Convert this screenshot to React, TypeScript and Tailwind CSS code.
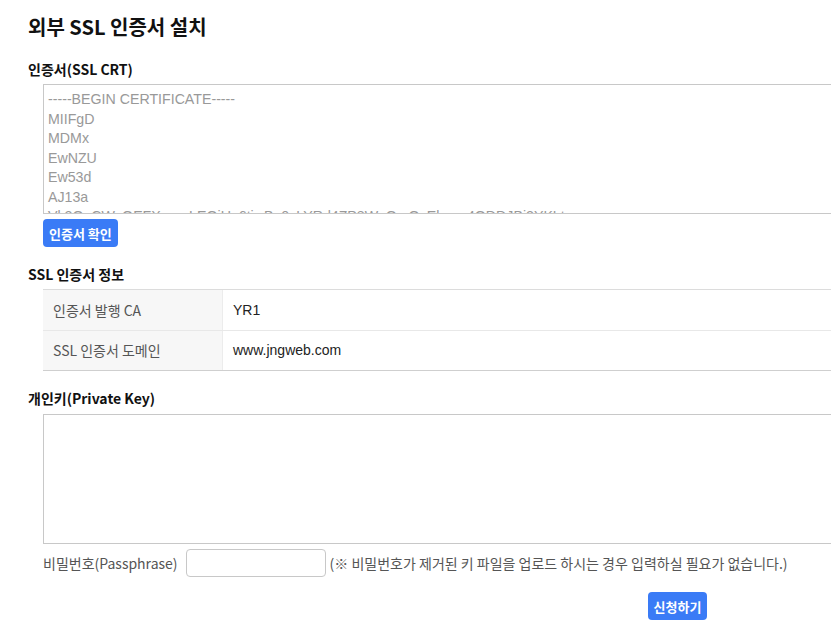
const KR = '"Noto Sans CJK KR", "Noto Sans", sans-serif';
const LAT = '"Liberation Sans", "Noto Sans CJK KR", sans-serif';

const certLines = [
  '-----BEGIN CERTIFICATE-----',
  'MIIFgD',
  'MDMx',
  'EwNZU',
  'Ew53d',
  'AJ13a',
  'Vk2OaCWvQEFXw  wLEQiUa6tiwBe0vLYRd4ZP8WuOmQyEk      4ODDJBi2YKLt',
];

function SectionLabel({ children, className }: { children: React.ReactNode; className?: string }) {
  return (
    <div className={`text-[14px] leading-[20px] font-bold text-[#111] ${className ?? ''}`} style={{ fontFamily: KR }}>
      {children}
    </div>
  );
}

function BlueButton({ children }: { children: React.ReactNode }) {
  return (
    <button
      className="h-[28px] px-[6px] rounded-[4px] bg-[#3a7bf6] text-white text-[13px] font-bold leading-none"
      style={{ fontFamily: KR }}
    >
      {children}
    </button>
  );
}

export default function App() {
  const info = [
    { k: '인증서 발행 CA', v: 'YR1' },
    { k: 'SSL 인증서 도메인', v: 'www.jngweb.com' },
  ];

  return (
    <div className="w-full min-h-[644px] overflow-hidden bg-white">
      <div className="w-[1300px] pl-[28px] pt-[12px]">
        <h2 className="text-[20px] leading-[30px] font-bold text-[#111]" style={{ fontFamily: KR }}>
          외부 SSL 인증서 설치
        </h2>

        <SectionLabel className="mt-[17px]">인증서(SSL CRT)</SectionLabel>
        {/* certificate box, last line is clipped by the box like in the source */}
        <div className="ml-[15px] mt-[5px] h-[130px] border border-[#c8c8c8] overflow-hidden pl-[4px] pt-[5px]">
          {certLines.map((line, i) => (
            <div
              key={i}
              className="text-[14.2px] leading-[19.5px] text-[#999] whitespace-pre"
              style={{ fontFamily: LAT }}
            >
              {line}
            </div>
          ))}
        </div>
        <div className="ml-[15px] mt-[5px]">
          <BlueButton>인증서 확인</BlueButton>
        </div>

        <SectionLabel className="mt-[17px]">SSL 인증서 정보</SectionLabel>
        <div className="ml-[15px] mt-[5px] border-t border-[#dcdcdc] border-b border-b-[#cfcfcf]">
          {info.map((row, i) => (
            <div key={row.k} className={`flex h-[40px] ${i > 0 ? 'border-t border-[#e8e8e8]' : ''}`}>
              <div
                className="w-[180px] shrink-0 bg-[#f7f7f7] border-r border-[#ececec] pl-[10px] flex items-center text-[14px] text-[#555]"
                style={{ fontFamily: KR }}
              >
                {row.k}
              </div>
              <div className="pl-[10px] flex items-center text-[14px] text-[#222]" style={{ fontFamily: LAT }}>
                {row.v}
              </div>
            </div>
          ))}
        </div>

        <SectionLabel className="mt-[17px]">개인키(Private Key)</SectionLabel>
        <div className="ml-[15px] mt-[6px] h-[130px] border border-[#c8c8c8]" />

        <div className="ml-[15px] mt-[5px] flex items-center h-[28px] text-[14px] text-[#555]" style={{ fontFamily: KR }}>
          <span>비밀번호(Passphrase)</span>
          <input className="ml-[8px] w-[140px] h-[28px] border border-[#c8c8c8] rounded-[4px] outline-none" />
          <span className="ml-[4px]">(※ 비밀번호가 제거된 키 파일을 업로드 하시는 경우 입력하실 필요가 없습니다.)</span>
        </div>

        <div className="mt-[15px] w-[1299px] flex justify-center">
          <BlueButton>신청하기</BlueButton>
        </div>
      </div>
    </div>
  );
}
